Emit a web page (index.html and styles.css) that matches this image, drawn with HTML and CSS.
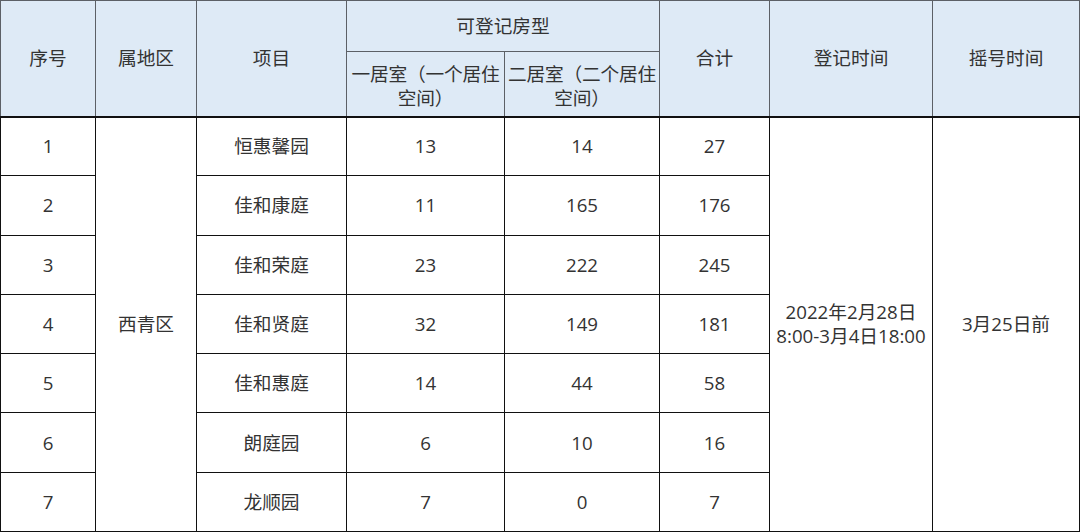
FILE: index.html
```html
<!DOCTYPE html>
<html lang="zh-CN">
<head>
<meta charset="utf-8">
<title>可登记房型</title>
<link rel="stylesheet" href="styles.css">
</head>
<body>
<table class="grid">
  <colgroup>
    <col class="c1"><col class="c2"><col class="c3"><col class="c4"><col class="c5"><col class="c6"><col class="c7"><col class="c8">
  </colgroup>
  <thead>
    <tr class="h1">
      <th rowspan="2">序号</th>
      <th rowspan="2">属地区</th>
      <th rowspan="2">项目</th>
      <th colspan="2">可登记房型</th>
      <th rowspan="2">合计</th>
      <th rowspan="2">登记时间</th>
      <th rowspan="2">摇号时间</th>
    </tr>
    <tr class="h2">
      <th class="sub">一居室（一个居住空间）</th>
      <th class="sub">二居室（二个居住空间）</th>
    </tr>
  </thead>
  <tbody>
    <tr><td>1</td><td rowspan="7">西青区</td><td>恒惠馨园</td><td>13</td><td>14</td><td>27</td><td rowspan="7">2022年2月28日<br>8:00-3月4日18:00</td><td rowspan="7">3月25日前</td></tr>
    <tr><td>2</td><td>佳和康庭</td><td>11</td><td>165</td><td>176</td></tr>
    <tr><td>3</td><td>佳和荣庭</td><td>23</td><td>222</td><td>245</td></tr>
    <tr><td>4</td><td>佳和贤庭</td><td>32</td><td>149</td><td>181</td></tr>
    <tr><td>5</td><td>佳和惠庭</td><td>14</td><td>44</td><td>58</td></tr>
    <tr><td>6</td><td>朗庭园</td><td>6</td><td>10</td><td>16</td></tr>
    <tr><td>7</td><td>龙顺园</td><td>7</td><td>0</td><td>7</td></tr>
  </tbody>
</table>
</body>
</html>
```
FILE: styles.css
```css
html, body {
  margin: 0;
  padding: 0;
  background: #ffffff;
}

.grid {
  border-collapse: collapse;
  table-layout: fixed;
  width: 1079px;
  font-family: "Open Sans", "Noto Sans CJK SC", sans-serif;
  font-size: 18.7px;
  color: #333333;
}

.c1 { width: 95px; }
.c2 { width: 101px; }
.c3 { width: 150px; }
.c4 { width: 158px; }
.c5 { width: 155px; }
.c6 { width: 110px; }
.c7 { width: 163px; }
.c8 { width: 147px; }

.grid th,
.grid td {
  padding: 0 1px;
  text-align: center;
  vertical-align: middle;
  font-weight: normal;
  line-height: 24px;
}

.grid th {
  background: #deeaf6;
  border: 1px solid #5c6066;
}

.grid td {
  border: 1px solid #111111;
}

.grid thead tr:last-child th,
.grid thead th[rowspan] {
  border-bottom: 2px solid #111111;
}

.h1 { height: 51px; }
.h2 { height: 65px; }

.grid .sub {
  line-height: 24px;
  padding: 0;
  vertical-align: top;
  padding-top: 10px;
  letter-spacing: -0.2px;
}

.grid tbody tr { height: 59.3px; }
```
